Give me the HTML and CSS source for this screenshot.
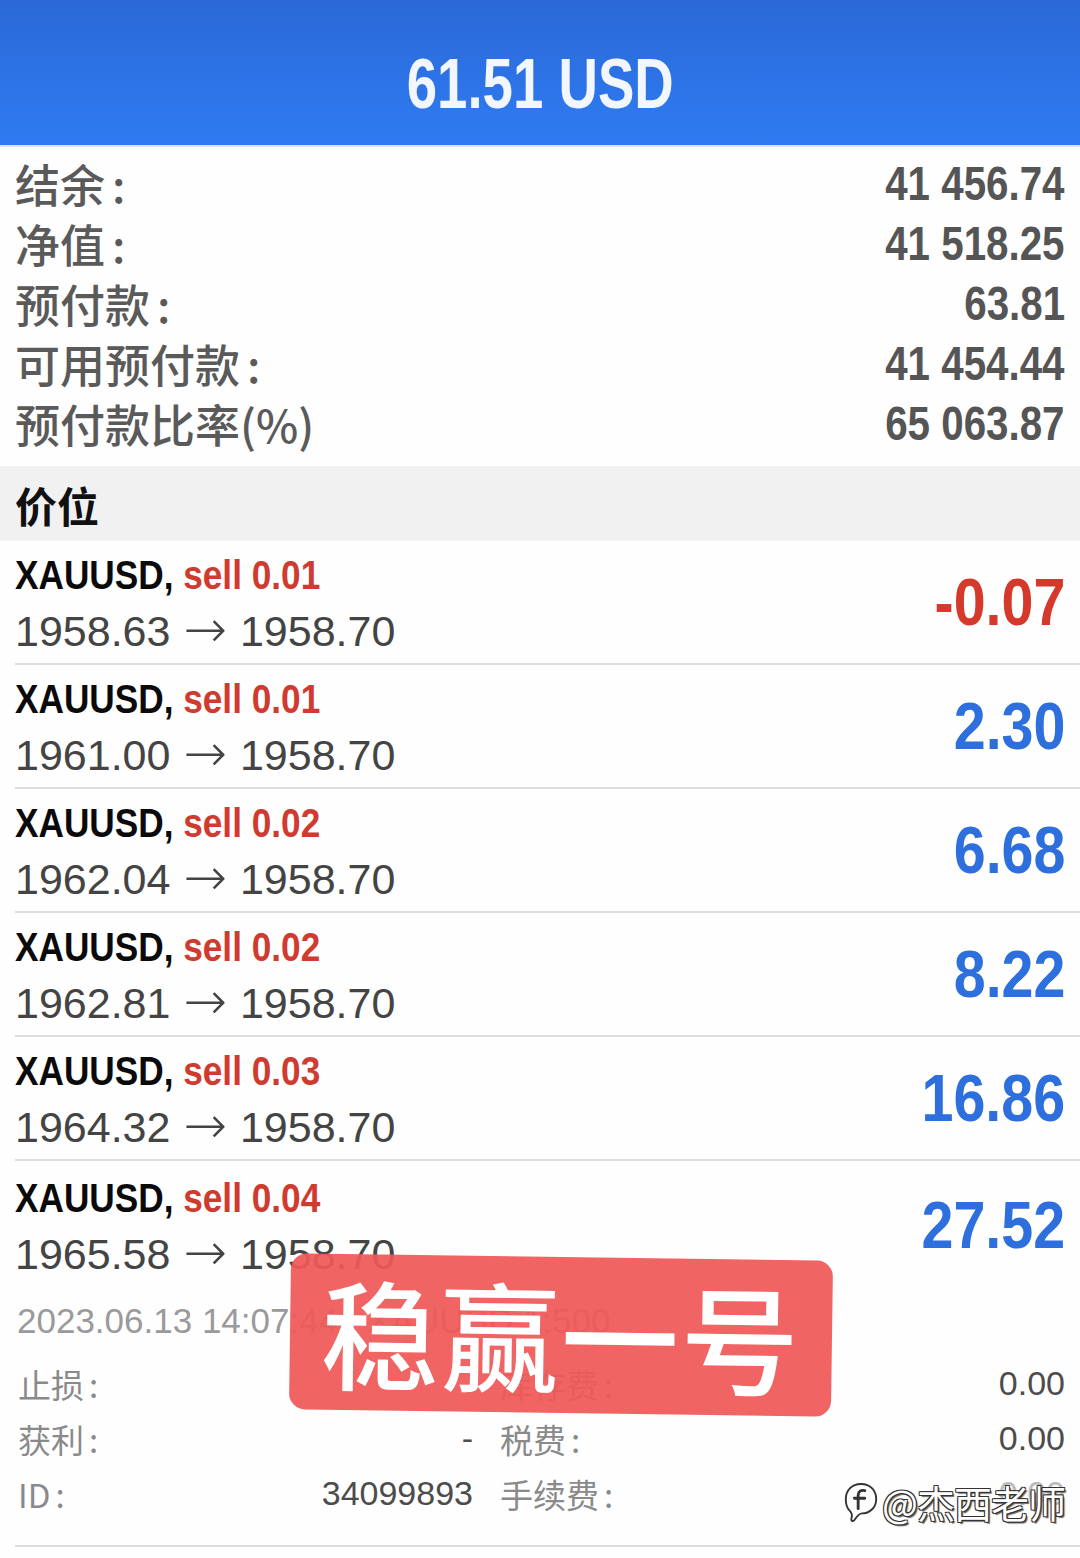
FILE: index.html
```html
<!DOCTYPE html>
<html lang="zh-CN">
<head>
<meta charset="utf-8">
<title>账户</title>
<link rel="stylesheet" href="styles.css">
</head>
<body>
<div class="page">
  <header class="top">
    <div class="total">61.51 USD</div>
  </header>

  <section class="summary">
    <div class="srow"><span class="slabel">结余<i class="colon">:</i></span><span class="sval">41 456.74</span></div>
    <div class="srow"><span class="slabel">净值<i class="colon">:</i></span><span class="sval">41 518.25</span></div>
    <div class="srow"><span class="slabel">预付款<i class="colon">:</i></span><span class="sval">63.81</span></div>
    <div class="srow"><span class="slabel">可用预付款<i class="colon">:</i></span><span class="sval">41 454.44</span></div>
    <div class="srow"><span class="slabel">预付款比率(%)</span><span class="sval">65 063.87</span></div>
  </section>

  <div class="section-head">价位</div>

  <ul class="positions">
    <li class="pos">
      <div class="pos-main">
        <div class="pos-left">
          <div class="sym">XAUUSD, <span class="sell">sell 0.01</span></div>
          <div class="prices">1958.63 <span class="arrow">→</span> 1958.70</div>
        </div>
        <div class="profit neg">-0.07</div>
      </div>
    </li>
    <li class="pos">
      <div class="pos-main">
        <div class="pos-left">
          <div class="sym">XAUUSD, <span class="sell">sell 0.01</span></div>
          <div class="prices">1961.00 <span class="arrow">→</span> 1958.70</div>
        </div>
        <div class="profit">2.30</div>
      </div>
    </li>
    <li class="pos">
      <div class="pos-main">
        <div class="pos-left">
          <div class="sym">XAUUSD, <span class="sell">sell 0.02</span></div>
          <div class="prices">1962.04 <span class="arrow">→</span> 1958.70</div>
        </div>
        <div class="profit">6.68</div>
      </div>
    </li>
    <li class="pos">
      <div class="pos-main">
        <div class="pos-left">
          <div class="sym">XAUUSD, <span class="sell">sell 0.02</span></div>
          <div class="prices">1962.81 <span class="arrow">→</span> 1958.70</div>
        </div>
        <div class="profit">8.22</div>
      </div>
    </li>
    <li class="pos">
      <div class="pos-main">
        <div class="pos-left">
          <div class="sym">XAUUSD, <span class="sell">sell 0.03</span></div>
          <div class="prices">1964.32 <span class="arrow">→</span> 1958.70</div>
        </div>
        <div class="profit">16.86</div>
      </div>
    </li>
    <li class="pos expanded">
      <div class="pos-main">
        <div class="pos-left">
          <div class="sym">XAUUSD, <span class="sell">sell 0.04</span></div>
          <div class="prices">1965.58 <span class="arrow">→</span> 1958.70</div>
        </div>
        <div class="profit">27.52</div>
      </div>
      <div class="opened">2023.06.13 14:07:44 &nbsp; XAUUSD 1:500</div>
      <div class="details">
        <span class="dlabel">止损<i class="colon">:</i></span><span class="dval">-</span>
        <span class="dlabel">库存费<i class="colon">:</i></span><span class="dval">0.00</span>
        <span class="dlabel">获利<i class="colon">:</i></span><span class="dval">-</span>
        <span class="dlabel">税费<i class="colon">:</i></span><span class="dval">0.00</span>
        <span class="dlabel">ID<i class="colon">:</i></span><span class="dval">34099893</span>
        <span class="dlabel">手续费<i class="colon">:</i></span><span class="dval hidden-val">0.00</span>
      </div>
    </li>
  </ul>

  <div class="stamp"><span>稳赢一号</span></div>

  <div class="credit">
    <svg class="credit-logo" width="38" height="46" viewBox="0 0 40 46">
      <path d="M20 4 C30 4 36 11 36 20 C36 29 29 35 21 35 C18 35 16 38 13 42 C11 44 9 43 10 40 C11 37 11 35 8 32 C5 29 4 25 4 20 C4 11 10 4 20 4 Z" fill="#fff" stroke="#333" stroke-width="2"/>
      <path d="M24 11 C20 10 17 12 17 16 L17 30 M13 19 L24 19" fill="none" stroke="#333" stroke-width="3" stroke-linecap="round"/>
    </svg>
    <span class="credit-text">@杰西老师</span>
  </div>
</div>
</body>
</html>
```

FILE: styles.css
```css
* { box-sizing: border-box; }

html, body {
  margin: 0;
  padding: 0;
  background: #ffffff;
}

body {
  width: 1080px;
  height: 1558px;
  overflow: hidden;
  font-family: "Liberation Sans", "Noto Sans CJK SC", sans-serif;
}

.page {
  position: relative;
  width: 1080px;
  height: 1558px;
  background: #fefefe;
}

i.colon {
  font-style: normal;
  margin-left: 7px;
}

.top {
  height: 147px;
  background: linear-gradient(180deg, #2a68d6 0%, #2d74e8 60%, #2f7bf1 100%);
  display: flex;
  align-items: center;
  justify-content: center;
  border-bottom: 2px solid #d6e4f7;
}

.total {
  display: inline-block;
  color: #f2f7ff;
  font-family: "Liberation Sans", sans-serif;
  font-weight: bold;
  font-size: 70px;
  line-height: 80px;
  transform: scaleX(0.78);
  transform-origin: center;
  margin-top: 22px;
  white-space: nowrap;
}

.summary {
  padding: 6px 15px 13px 15px;
  display: flex;
  flex-direction: column;
}

.srow {
  height: 60px;
  display: flex;
  align-items: center;
  justify-content: space-between;
}

.slabel {
  font-family: "Noto Sans CJK SC", "Liberation Sans", sans-serif;
  font-weight: 500;
  font-size: 45px;
  color: #5a5a5a;
}

.sval {
  display: inline-block;
  font-family: "Liberation Sans", sans-serif;
  font-weight: bold;
  font-size: 48px;
  color: #555555;
  transform: scaleX(0.84);
  transform-origin: right center;
  white-space: nowrap;
}

.section-head {
  height: 75px;
  background: #f1f1f1;
  display: flex;
  align-items: center;
  padding-left: 15px;
  padding-top: 2px;
  font-family: "Noto Sans CJK SC", sans-serif;
  font-weight: bold;
  font-size: 42px;
  color: #111111;
}

.positions {
  list-style: none;
  margin: 0;
  padding: 0 0 0 15px;
}

.pos {
  border-bottom: 2px solid #dddddd;
}

.pos-main {
  height: 122px;
  display: flex;
  align-items: center;
  justify-content: space-between;
  padding-right: 15px;
}

.pos-left {
  display: flex;
  flex-direction: column;
  align-items: flex-start;
  gap: 4px;
  padding-top: 1px;
}

.sym {
  display: inline-block;
  font-family: "Liberation Sans", sans-serif;
  font-weight: bold;
  font-size: 40px;
  line-height: 52px;
  color: #0a0a0a;
  transform: scaleX(0.88);
  transform-origin: left center;
  white-space: nowrap;
}

.sell {
  color: #d03b30;
}

.prices {
  font-family: "Liberation Sans", "DejaVu Sans", sans-serif;
  font-size: 43px;
  line-height: 52px;
  height: 52px;
  color: #444444;
  white-space: nowrap;
}

.arrow {
  font-family: "DejaVu Sans", sans-serif;
  font-weight: 300;
  font-size: 52px;
  line-height: 0;
  margin: 0 1px;
  vertical-align: -1px;
}

.profit {
  display: inline-block;
  font-family: "Liberation Sans", sans-serif;
  font-weight: bold;
  font-size: 66px;
  color: #2c6fdd;
  transform: scaleX(0.87);
  transform-origin: right center;
  white-space: nowrap;
}

.profit.neg {
  color: #d5392b;
}

.expanded {
  padding-bottom: 24px;
}

.expanded .pos-main {
  height: 128px;
}

.opened {
  font-size: 35px;
  color: #9a9a9a;
  height: 64px;
  line-height: 64px;
  padding-left: 2px;
  white-space: nowrap;
}

.details {
  display: grid;
  grid-template-columns: 110px 345px 140px 1fr;
  grid-auto-rows: 55px;
  align-items: center;
  padding: 3px 15px 0 3px;
  font-size: 34px;
}

.dlabel {
  font-family: "Noto Sans CJK SC", "Liberation Sans", sans-serif;
  color: #8a8a8a;
  font-size: 33px;
  white-space: nowrap;
}

.dlabel i.colon {
  margin-left: 5px;
}

.details .dlabel:nth-child(4n+3) {
  padding-left: 27px;
}

.dval {
  text-align: right;
  color: #4c4c4c;
  font-family: "Liberation Sans", sans-serif;
}

.hidden-val {
  color: #bbbbbb;
}

.stamp {
  position: absolute;
  left: 290px;
  top: 1257px;
  width: 542px;
  height: 156px;
  background: rgba(240, 88, 88, 0.93);
  border-radius: 16px;
  transform: rotate(0.8deg);
  display: flex;
  align-items: center;
  justify-content: center;
}

.stamp span {
  font-family: "Noto Sans CJK SC", sans-serif;
  font-weight: 500;
  font-size: 118px;
  color: #ffffff;
  letter-spacing: 2px;
  margin-top: -6px;
}

.credit {
  position: absolute;
  left: 842px;
  top: 1474px;
  display: flex;
  align-items: center;
  gap: 2px;
}

.credit-text {
  font-family: "Noto Sans CJK SC", sans-serif;
  font-size: 38px;
  color: #ffffff;
  letter-spacing: -1px;
  text-shadow: -1px -1px 0 #333, 1px -1px 0 #333, -1px 1px 0 #333, 1px 1px 0 #333, 2px 2px 1px #666;
}
```
